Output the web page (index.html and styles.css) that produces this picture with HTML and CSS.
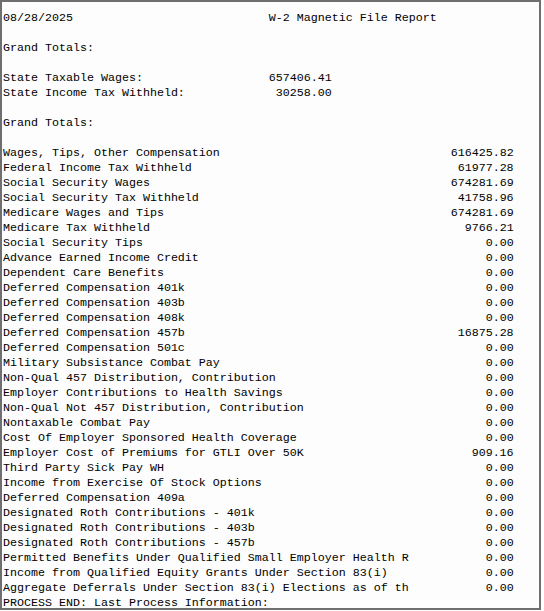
FILE: index.html
```html
<!DOCTYPE html>
<html>
<head>
<meta charset="utf-8">
<link rel="stylesheet" href="styles.css">
</head>
<body>
<div class="report">
  <div class="row head"><span class="date">08/28/2025</span><span class="title">W-2 Magnetic File Report</span></div>
  <div class="blank"></div>
  <div class="row">Grand Totals:</div>
  <div class="blank"></div>
  <div class="row state"><span>State Taxable Wages:</span><span class="val">657406.41</span></div>
  <div class="row state"><span>State Income Tax Withheld:</span><span class="val">30258.00</span></div>
  <div class="blank"></div>
  <div class="row">Grand Totals:</div>
  <div class="blank"></div>
  <div class="row item"><span>Wages, Tips, Other Compensation</span><span class="val">616425.82</span></div>
  <div class="row item"><span>Federal Income Tax Withheld</span><span class="val">61977.28</span></div>
  <div class="row item"><span>Social Security Wages</span><span class="val">674281.69</span></div>
  <div class="row item"><span>Social Security Tax Withheld</span><span class="val">41758.96</span></div>
  <div class="row item"><span>Medicare Wages and Tips</span><span class="val">674281.69</span></div>
  <div class="row item"><span>Medicare Tax Withheld</span><span class="val">9766.21</span></div>
  <div class="row item"><span>Social Security Tips</span><span class="val">0.00</span></div>
  <div class="row item"><span>Advance Earned Income Credit</span><span class="val">0.00</span></div>
  <div class="row item"><span>Dependent Care Benefits</span><span class="val">0.00</span></div>
  <div class="row item"><span>Deferred Compensation 401k</span><span class="val">0.00</span></div>
  <div class="row item"><span>Deferred Compensation 403b</span><span class="val">0.00</span></div>
  <div class="row item"><span>Deferred Compensation 408k</span><span class="val">0.00</span></div>
  <div class="row item"><span>Deferred Compensation 457b</span><span class="val">16875.28</span></div>
  <div class="row item"><span>Deferred Compensation 501c</span><span class="val">0.00</span></div>
  <div class="row item"><span>Military Subsistance Combat Pay</span><span class="val">0.00</span></div>
  <div class="row item"><span>Non-Qual 457 Distribution, Contribution</span><span class="val">0.00</span></div>
  <div class="row item"><span>Employer Contributions to Health Savings</span><span class="val">0.00</span></div>
  <div class="row item"><span>Non-Qual Not 457 Distribution, Contribution</span><span class="val">0.00</span></div>
  <div class="row item"><span>Nontaxable Combat Pay</span><span class="val">0.00</span></div>
  <div class="row item"><span>Cost Of Employer Sponsored Health Coverage</span><span class="val">0.00</span></div>
  <div class="row item"><span>Employer Cost of Premiums for GTLI Over 50K</span><span class="val">909.16</span></div>
  <div class="row item"><span>Third Party Sick Pay WH</span><span class="val">0.00</span></div>
  <div class="row item"><span>Income from Exercise Of Stock Options</span><span class="val">0.00</span></div>
  <div class="row item"><span>Deferred Compensation 409a</span><span class="val">0.00</span></div>
  <div class="row item"><span>Designated Roth Contributions - 401k</span><span class="val">0.00</span></div>
  <div class="row item"><span>Designated Roth Contributions - 403b</span><span class="val">0.00</span></div>
  <div class="row item"><span>Designated Roth Contributions - 457b</span><span class="val">0.00</span></div>
  <div class="row item"><span>Permitted Benefits Under Qualified Small Employer Health R</span><span class="val">0.00</span></div>
  <div class="row item"><span>Income from Qualified Equity Grants Under Section 83(i)</span><span class="val">0.00</span></div>
  <div class="row item"><span>Aggregate Deferrals Under Section 83(i) Elections as of th</span><span class="val">0.00</span></div>
  <div class="row">PROCESS END: Last Process Information:</div>
</div>
</body>
</html>
```

FILE: styles.css
```css
html, body {
  margin: 0;
  padding: 0;
  background: #ffffff;
}

.report {
  box-sizing: border-box;
  width: 541px;
  height: 610px;
  border: 2px solid #6f6f6f;
  background: #fcfdfc;
  padding: 9px 0 0 1px;
  overflow: hidden;
  font-family: "Liberation Mono", "Courier New", monospace;
  font-size: 11.667px;
  line-height: 15px;
  color: #000;
}

.row {
  height: 15px;
  white-space: nowrap;
}

.blank {
  height: 15px;
}

.head {
  display: grid;
  grid-template-columns: 38ch auto;
}

.state {
  display: grid;
  grid-template-columns: 38ch 9ch;
}

.item {
  display: grid;
  grid-template-columns: 64ch 9ch;
}

.val {
  text-align: right;
}
```
